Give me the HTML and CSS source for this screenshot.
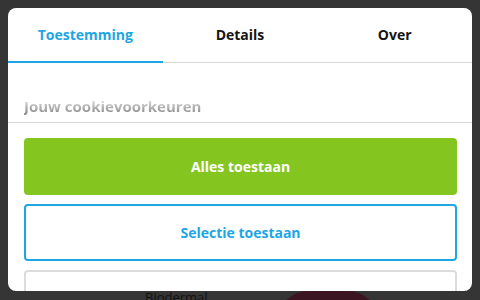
FILE: index.html
```html
<!DOCTYPE html>
<html lang="nl">

<head>
    <meta charset="UTF-8">
    <meta name="viewport" content="width=device-width, initial-scale=1.0">
    <title>Cookievoorkeuren</title>
    <link rel="stylesheet" href="styles.css">
</head>

<body>
    <div class="dialog">
        <div class="tabs">
            <div class="tab active">Toestemming</div>
            <div class="tab">Details</div>
            <div class="tab">Over</div>
        </div>

        <div class="intro">
            <h2 class="intro-title">Jouw cookievoorkeuren</h2>
        </div>

        <div class="buttons">
            <button class="btn btn-all">Alles toestaan</button>
            <button class="btn btn-selection">Selectie toestaan</button>
            <button class="btn btn-deny">Weigeren</button>
        </div>
    </div>

    <div class="page-behind">
        <span class="brand">Biodermal</span>
        <span class="blob"></span>
    </div>
</body>

</html>
```

FILE: styles.css
```css
body {
    font-family: "Open Sans", Arial, sans-serif;
    margin: 0;
    padding: 8px 8px 0;
    background-color: #353535;
    height: 300px;
    overflow: hidden;
    box-sizing: border-box;
}

.dialog {
    background-color: white;
    border-radius: 8px;
    height: 283px;
    overflow: hidden;
}

.tabs {
    display: grid;
    grid-template-columns: repeat(3, 1fr);
    border-bottom: 1px solid #d6d6d6;
}

.tab {
    height: 54px;
    display: flex;
    align-items: center;
    justify-content: center;
    font-size: 14px;
    font-weight: 700;
    color: #141414;
    box-sizing: border-box;
    padding-bottom: 1px;
}

.tab.active {
    color: #1ea6e4;
    border-bottom: 2px solid #1ea6e4;
    margin-bottom: -1px;
    padding-bottom: 0;
    height: 55px;
}

.intro {
    height: 59px;
    border-bottom: 1px solid #d6d6d6;
    padding: 0 16px;
    display: flex;
    align-items: flex-end;
}

.intro-title {
    margin: 0 0 6px;
    font-size: 15px;
    font-weight: 700;
    color: #a0a0a0;
    background: linear-gradient(#e4e4e4 15%, #8e8e8e 85%);
    -webkit-background-clip: text;
    background-clip: text;
    -webkit-text-fill-color: transparent;
}

.buttons {
    display: flex;
    flex-direction: column;
    gap: 9px;
    padding: 15px 15px 0 16px;
}

.btn {
    font-family: inherit;
    height: 57px;
    border-radius: 4px;
    font-size: 14px;
    font-weight: 700;
    cursor: pointer;
}

.btn-all {
    background-color: #84c61f;
    border: none;
    color: white;
}

.btn-selection {
    background-color: white;
    border: 2px solid #1ea6e4;
    color: #1ea6e4;
}

.btn-deny {
    background-color: white;
    border: 2px solid #dcdcdc;
    color: #333;
}

.page-behind {
    display: flex;
    align-items: flex-start;
    padding-left: 137px;
    gap: 70px;
}

.brand {
    font-size: 13px;
    color: #111;
    line-height: 1;
    margin-top: 0;
}

.blob {
    width: 100px;
    height: 60px;
    border-radius: 30px 30px 0 0;
    background-color: #3b1521;
}
```
